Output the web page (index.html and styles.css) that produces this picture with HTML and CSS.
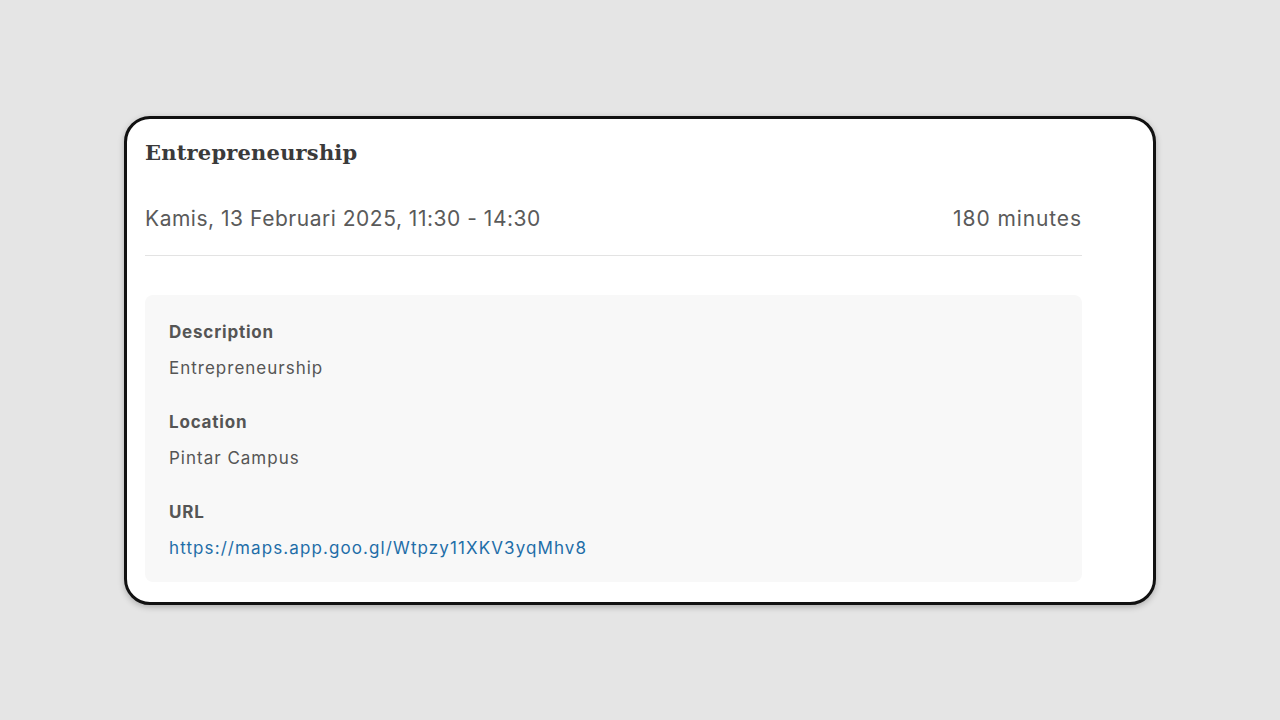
FILE: index.html
```html
<!DOCTYPE html>
<html lang="id">
<head>
<meta charset="utf-8">
<title>Entrepreneurship</title>
<link rel="stylesheet" href="styles.css">
</head>
<body>
<main class="card">
  <h1 class="title">Entrepreneurship</h1>
  <div class="when">
    <span class="date">Kamis, 13 Februari 2025, 11:30 - 14:30</span>
    <span class="duration">180 minutes</span>
  </div>
  <section class="details">
    <div class="field">
      <div class="label">Description</div>
      <div class="value">Entrepreneurship</div>
    </div>
    <div class="field">
      <div class="label">Location</div>
      <div class="value">Pintar Campus</div>
    </div>
    <div class="field">
      <div class="label">URL</div>
      <a class="value link" href="#">https://maps.app.goo.gl/Wtpzy11XKV3yqMhv8</a>
    </div>
  </section>
</main>
</body>
</html>
```
FILE: styles.css
```css
html, body {
  margin: 0;
  height: 100%;
}
body {
  background: #e5e5e5;
  display: flex;
  align-items: center;
  justify-content: center;
  font-family: Inter, "Noto Sans", sans-serif;
  color: #555;
}
.card {
  box-sizing: border-box;
  width: 1032px;
  background: #fff;
  border: 3px solid #111;
  border-radius: 26px;
  padding: 19px 71px 20px 18px;
  box-shadow: 0 2px 6px rgba(0, 0, 0, 0.25);
}
.title {
  margin: 0;
  font-family: "DejaVu Serif", serif;
  font-weight: bold;
  font-size: 21px;
  line-height: 30px;
  color: #3a3a3a;
  letter-spacing: 0.2px;
}
.when {
  display: flex;
  justify-content: space-between;
  margin-top: 36px;
  padding-bottom: 21px;
  border-bottom: 1px solid #e3e3e3;
  font-size: 21px;
  line-height: 30px;
  color: #5a5a5a;
  letter-spacing: 0.52px;
}
.duration {
  letter-spacing: 0.9px;
}
.details {
  margin-top: 39px;
  background: #f8f8f8;
  border-radius: 8px;
  padding: 25px 24px 22px;
  display: flex;
  flex-direction: column;
  gap: 30px;
}
.field {
  display: flex;
  flex-direction: column;
  gap: 12px;
}
.label {
  font-weight: 700;
  font-size: 17px;
  line-height: 24px;
  color: #555;
  letter-spacing: 0.8px;
}
.value {
  font-size: 17px;
  line-height: 24px;
  color: #555;
  letter-spacing: 1px;
}
.link {
  color: #1f6ea8;
  text-decoration: none;
  letter-spacing: 1.1px;
}
```
